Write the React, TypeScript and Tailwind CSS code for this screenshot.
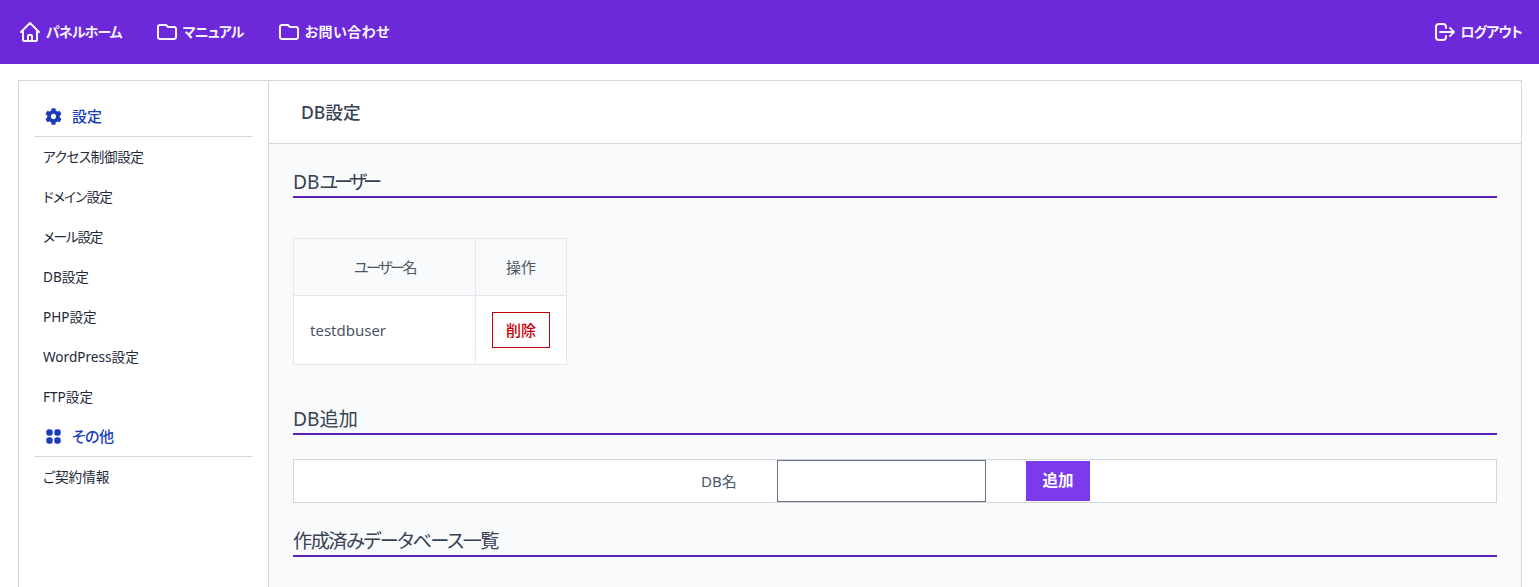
import { FaCog } from 'react-icons/fa';
import { HiOutlineHome, HiOutlineFolder, HiOutlineLogout } from 'react-icons/hi';

const settingsLinks = [
    { label: 'アクセス制御設定', tracking: 'tracking-[-0.4px]' },
    { label: 'ドメイン設定', tracking: 'tracking-[-0.8px]' },
    { label: 'メール設定', tracking: 'tracking-[-1.2px]' },
    { label: 'DB設定', tracking: '' },
    { label: 'PHP設定', tracking: '' },
    { label: 'WordPress設定', tracking: '' },
    { label: 'FTP設定', tracking: '' },
];

const Grid = () => (
    <svg width="15" height="15" viewBox="0 0 15 15" fill="currentColor">
        <rect x="0.3" y="0.3" width="6.4" height="6.4" rx="2.6" />
        <rect x="8.3" y="0.3" width="6.4" height="6.4" rx="2.6" />
        <rect x="0.3" y="8.3" width="6.4" height="6.4" rx="2.6" />
        <rect x="8.3" y="8.3" width="6.4" height="6.4" rx="2.6" />
    </svg>
);

const SectionTitle = ({ children, tracking }: { children: React.ReactNode; tracking?: string }) => (
    <h3 className={`text-[19.2px] leading-7 text-gray-700 border-b-2 border-[#5b21b6] h-[30px] ${tracking ?? ''}`}>{children}</h3>
);

const NavItem = ({ icon, label, className }: { icon: React.ReactNode; label: string; className: string }) => (
    <a className={`flex items-center text-sm font-bold text-violet-50 ${className}`}>
        {icon}
        <span>{label}</span>
    </a>
);

const App = () => {
    return (
        <div className='h-screen overflow-hidden bg-white font-["Noto_Sans","Noto_Sans_CJK_JP",sans-serif] [font-feature-settings:"palt"]'>
            <header className='h-16 bg-[#6d28d9] flex flex-row items-center justify-between pl-[18px] pr-[17px]'>
                <div className='flex flex-row items-center gap-[33px]'>
                    <NavItem className='gap-1 tracking-[-0.95px]' icon={<HiOutlineHome size={24} />} label='パネルホーム' />
                    <NavItem className='gap-1 tracking-[-0.8px]' icon={<HiOutlineFolder size={24} />} label='マニュアル' />
                    <NavItem className='gap-1 tracking-[0.4px]' icon={<HiOutlineFolder size={24} />} label='お問い合わせ' />
                </div>
                <NavItem className='gap-[3px] tracking-[-0.8px]' icon={<HiOutlineLogout size={24} />} label='ログアウト' />
            </header>

            <div className='ml-[18px] mr-[17px] mt-4 flex flex-row border border-gray-300 h-[800px]'>
                <aside className='w-[250px] shrink-0 border-r border-gray-300 px-4 pt-[17px]'>
                    <div className='flex items-center h-[39px] pb-[1px] border-b border-gray-300 pl-[10px] gap-[10px] text-[15px] font-medium text-blue-800'>
                        <FaCog size={17} />
                        <span>設定</span>
                    </div>
                    {settingsLinks.map((link) => (
                        <a key={link.label} className={`flex items-center h-10 pl-2 text-[13.6px] text-gray-800 ${link.tracking}`}>{link.label}</a>
                    ))}
                    <div className='flex items-center h-10 border-b border-gray-300 pl-[11px] gap-[11px] text-[15px] font-medium text-blue-800 tracking-[-0.5px]'>
                        <Grid />
                        <span>その他</span>
                    </div>
                    <a className='flex items-center h-10 pl-2 text-[13.6px] text-gray-800'>ご契約情報</a>
                </aside>

                <main className='flex-1 min-w-0'>
                    <div className='h-[63px] border-b border-gray-300 flex items-center px-8 text-[17.6px] font-medium text-gray-700'>
                        <h2>DB設定</h2>
                    </div>
                    <div className='bg-gray-50 h-full px-6 pt-6'>
                        <SectionTitle>DB<span className='tracking-[-4px]'>ユーザー</span></SectionTitle>

                        <table className='mt-10 text-[15px] text-gray-600 border-collapse'>
                            <thead>
                                <tr className='h-[57px]'>
                                    <th className='w-[182px] border border-gray-200 font-normal tracking-[-2.4px]'>ユーザー名</th>
                                    <th className='w-[91px] border border-gray-200 font-normal'>操作</th>
                                </tr>
                            </thead>
                            <tbody>
                                <tr className='h-[69px] bg-white'>
                                    <td className='border border-gray-200 px-4'>testdbuser</td>
                                    <td className='border border-gray-200 text-center'>
                                        <button className='w-[58px] h-9 border border-red-700 text-red-700 font-medium'>削除</button>
                                    </td>
                                </tr>
                            </tbody>
                        </table>

                        <div className='mt-10'>
                            <SectionTitle>DB追加</SectionTitle>
                        </div>

                        <div className='mt-6 h-11 border border-gray-300 bg-white flex flex-row items-center text-[15px] text-gray-600'>
                            <label className='w-[483px] pl-[407px] shrink-0'>DB名</label>
                            <input className='w-[209px] h-[42px] border border-gray-500 bg-white' />
                            <button className='ml-10 w-16 h-10 bg-[#7c3aed] text-white font-bold text-[15.5px]'>追加</button>
                        </div>

                        <div className='mt-6'>
                            <SectionTitle tracking='tracking-[-1.5px]'>作成済みデータベース一覧</SectionTitle>
                        </div>
                    </div>
                </main>
            </div>
        </div>
    )
}

export default App
